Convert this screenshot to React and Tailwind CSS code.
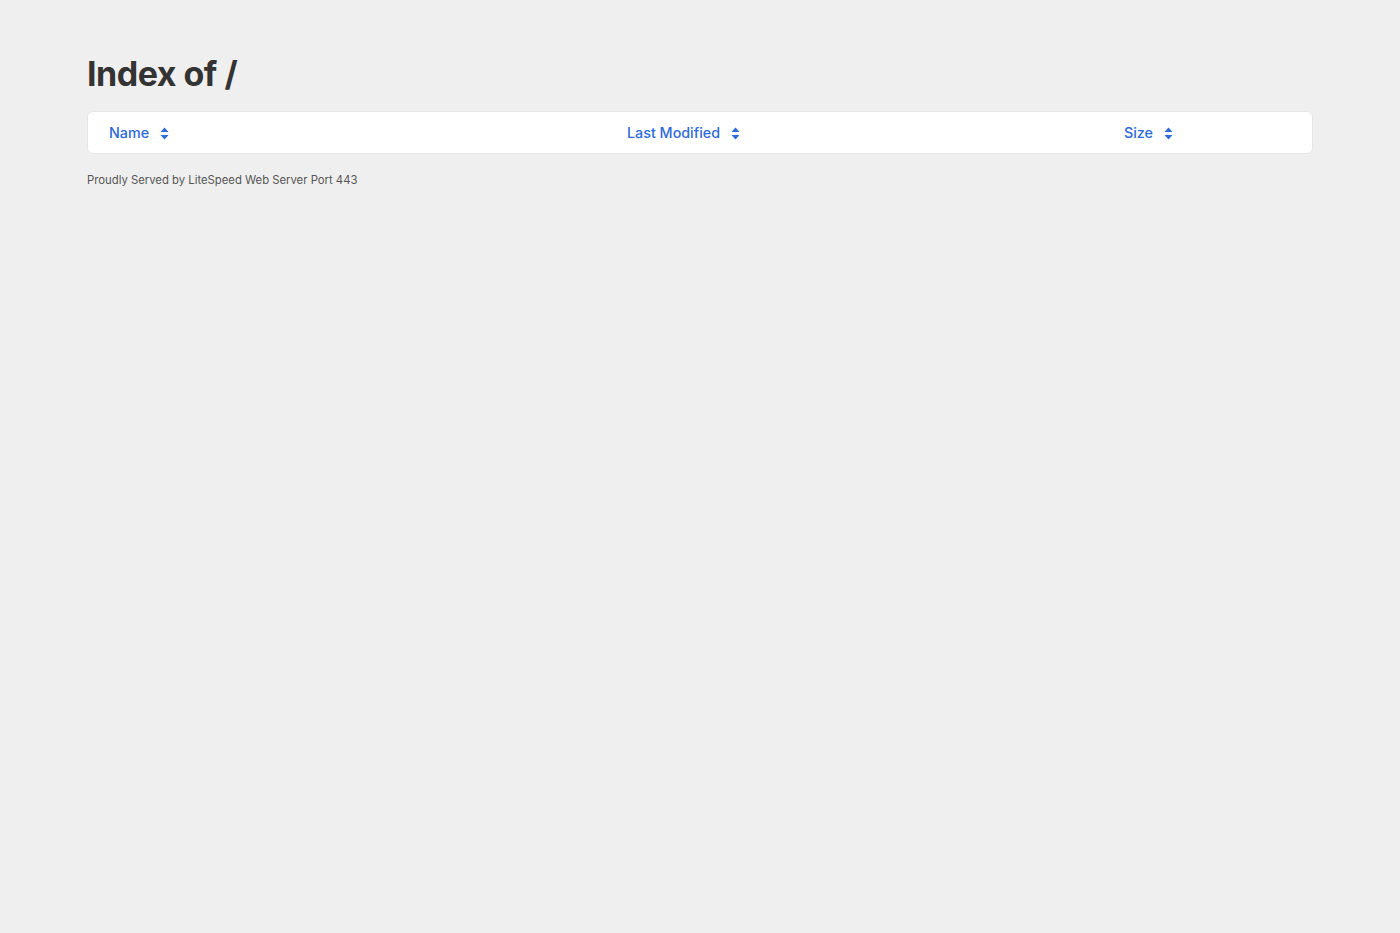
import React from 'react';

function SortIcon() {
  return (
    <svg width="9" height="13" viewBox="0 0 9 13" className="ml-[11px] inline-block">
      <path d="M4.5 0.5 L8.5 5 H0.5 Z" fill="currentColor" />
      <path d="M4.5 12.5 L8.5 8 H0.5 Z" fill="currentColor" />
    </svg>
  );
}

function HeaderCell({ label }) {
  return (
    <div className="flex items-center pt-[1px] text-[14.3px] font-medium text-[#2e6ad9]">
      <span>{label}</span>
      <SortIcon />
    </div>
  );
}

export default function App() {
  return (
    <div className="min-h-[933px] bg-[#f0efef] px-[87px] pt-[54px]" style={{ fontFamily: 'Inter, "Noto Sans", sans-serif' }}>
      <h1 className="text-[34px] font-bold leading-[40px] text-[#333333] tracking-[-0.5px]">Index of /</h1>
      <div className="mt-[17px] h-[43px] rounded-[6px] border border-[#e6e6e6] bg-white px-[21px] grid grid-cols-[518px_497px_1fr] items-center">
        <HeaderCell label="Name" />
        <HeaderCell label="Last Modified" />
        <HeaderCell label="Size" />
      </div>
      <p className="mt-[18px] text-[11.3px] text-[#555555]">Proudly Served by LiteSpeed Web Server Port 443</p>
    </div>
  );
}
